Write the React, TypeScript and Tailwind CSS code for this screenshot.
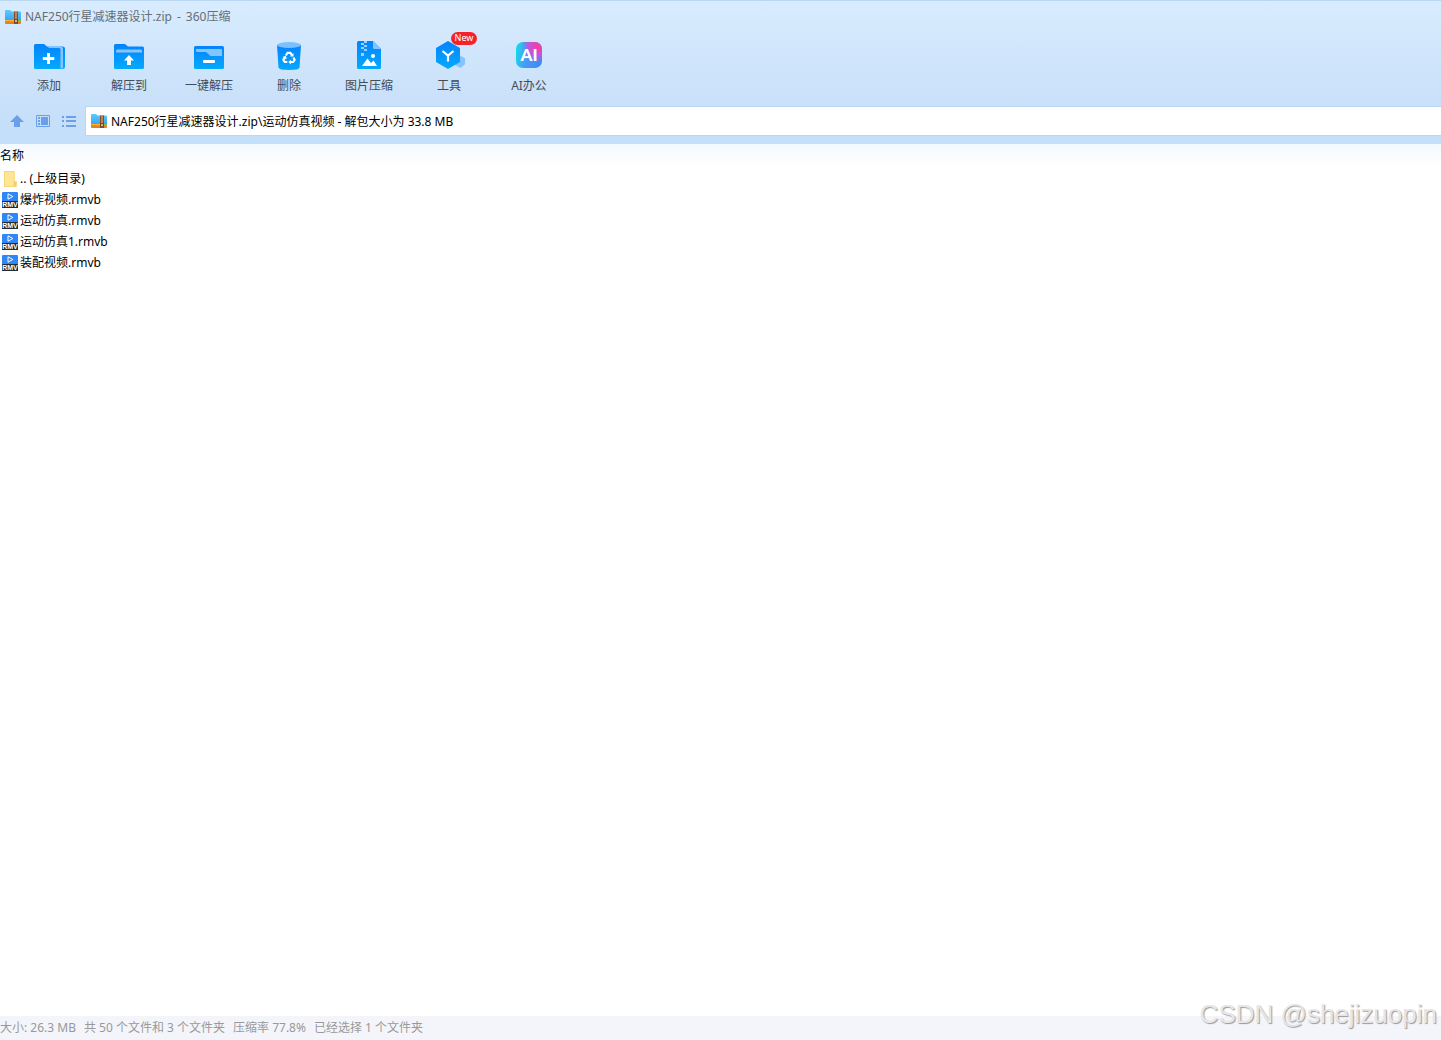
import type {ReactNode} from "react";

const ArchiveIcon = () => (
    <svg width="16" height="14" viewBox="0 0 16 14" className="shrink-0" aria-hidden="true">
        <defs>
            <linearGradient id="archive" x1="0" y1="0" x2="0" y2="1">
                <stop offset="0" stopColor="#5fcbfb"/>
                <stop offset="1" stopColor="#3aa0f2"/>
            </linearGradient>
        </defs>
        <path d="M0 1.2Q0 0 1.2 0H5l1.600 1.500H15q1 0 1 1V11H0z" fill="url(#archive)"/>
        <path d="M0 10h16v1.600H0z" fill="#f5b62e"/>
        <path d="M0 11.300h16V13q0 1-1 1H1q-1 0-1-1z" fill="#f07a22"/>
        <path d="M0 11.200h5v1H0zM13 10h3v1.500h-3z" fill="#79b943"/>
        <path d="M9 1.500h4V14H9z" fill="#8a4a22"/>
        <path d="M10.500 1.500h1V9h-1z" fill="#e8c08a"/>
        <rect x="10" y="9.500" width="2" height="3" fill="#fff3d8" stroke="#6d3512" strokeWidth=".7"/>
    </svg>
)

const Blue = ({id}: { id: string }) => (
    <defs>
        <linearGradient id={id} x1="0" y1="0" x2="0" y2="1">
            <stop offset="0" stopColor="#0583fc"/>
            <stop offset="1" stopColor="#04a9fe"/>
        </linearGradient>
    </defs>
)

const AddIcon = () => (
    <svg width="32" height="32" viewBox="0 0 32 32" aria-hidden="true">
        <Blue id="add"/>
        <path d="M1 5.500Q1 4 2.500 4H11l3 2.500h15.500q2.500 0 2.500 2V27q0 2-2 2H2.500Q1 29 1 27.500z" fill="url(#add)"/>
        <path d="M14 6h12.500q3.500 0 3.500 2.500V27q0 1-.8 1.500h-1.700V9.500q0-1.500-1.500-1.500H16z" fill="#85c5ff"/>
        <path d="M14.100 13h2.900v4h4.300v2.900H17V24h-2.900v-4.100H9.800V17h4.300z" fill="#fff"/>
    </svg>
)

const ExtractIcon = () => (
    <svg width="32" height="32" viewBox="0 0 32 32" aria-hidden="true">
        <Blue id="extract"/>
        <path d="M1 5.500Q1 4 2.500 4H12l3 2.500h14.500Q31 6.500 31 8v19.500q0 1.500-1.500 1.500h-27Q1 29 1 27.500z" fill="url(#extract)"/>
        <path d="M3 12.500V11q0-1.500 1.500-1.500h23Q29 9.500 29 11v1.500z" fill="#85c5ff"/>
        <path d="M16 15l5 5.500h-3V25h-4v-4.500h-3z" fill="#fff"/>
    </svg>
)

const QuickExtractIcon = () => (
    <svg width="32" height="32" viewBox="0 0 32 32" aria-hidden="true">
        <Blue id="quick"/>
        <rect x="1" y="6" width="30" height="23" rx="1.500" fill="url(#quick)"/>
        <path d="M3 9h25q1 0 1 1v6H17.500L13 12H4q-1 0-1-1z" fill="#85c5ff"/>
        <rect x="10" y="20" width="12" height="3" rx="1" fill="#fff"/>
    </svg>
)

const DeleteIcon = () => (
    <svg width="32" height="32" viewBox="0 0 32 32" aria-hidden="true">
        <Blue id="delete"/>
        <path d="M4 5h24l-1.500 22.500Q26.300 30 16 30T5.500 27.500z" fill="url(#delete)"/>
        <ellipse cx="16" cy="5" rx="12" ry="3" fill="#7cc1ff"/>
        <g fill="none" stroke="#fff" strokeWidth="2.200">
            <path d="M12.800 15.500l1.800-2.700h2.800l1.400 2.300"/>
            <path d="M20.400 17.500l1.200 2.200-1.400 2.300h-3.400"/>
            <path d="M14.300 22h-2.600l-1.300-2.300 1.400-2.300"/>
        </g>
        <path d="M20.500 13v3.500h-3.500zM18 19.800v4.600l-2.700-2.300zM9.500 17l3.400-1.200.8 3.400z" fill="#fff"/>
    </svg>
)

const ImageZipIcon = () => (
    <svg width="32" height="32" viewBox="0 0 32 32" aria-hidden="true">
        <Blue id="image"/>
        <path d="M4 2.500Q4 1 5.500 1H20l8 8v18.500q0 1.500-1.500 1.500h-21Q4 29 4 27.500z" fill="url(#image)"/>
        <path d="M20 1l8 8h-6.500Q20 9 20 7.500z" fill="#85c5ff"/>
        <path d="M11 1h3v2h-3zM8 3h3v2H8zM11 5h3v2h-3zM8 7h3v2H8zM11 9h3v2h-3zM8 13h3v3H8z" fill="#9cd1ff"/>
        <circle cx="20" cy="16" r="2" fill="#fff"/>
        <path d="M9 26l5.500-7.500L18 23l2.500-2.500L24 26z" fill="#fff"/>
    </svg>
)

const ToolsIcon = () => (
    <svg width="32" height="32" viewBox="0 0 32 32" aria-hidden="true">
        <Blue id="tools"/>
        <path d="M27 15.500l5 2.800v6L27.500 28 22 25z" fill="#84c3fc"/>
        <path d="M15 1l12 6.900v14L15 29 3 21.900v-14z" fill="url(#tools)"/>
        <path d="M9.500 11l5.500 4.500 5.500-4.500M15 15v6.500" fill="none" stroke="#fff" strokeWidth="2.200"/>
    </svg>
)

const AiIcon = () => (
    <svg width="32" height="32" viewBox="0 0 32 32" aria-hidden="true">
        <defs>
            <linearGradient id="ai" x1="0" y1=".4" x2="1" y2=".6">
                <stop offset="0" stopColor="#18d5ee"/>
                <stop offset=".45" stopColor="#4a98f5"/>
                <stop offset="1" stopColor="#3c8bf5"/>
            </linearGradient>
            <radialGradient id="aiPink" cx=".85" cy=".15" r=".65">
                <stop offset="0" stopColor="#fa3c96"/>
                <stop offset=".55" stopColor="#c554de"/>
                <stop offset="1" stopColor="#8b6cf0" stopOpacity="0"/>
            </radialGradient>
        </defs>
        <rect x="3" y="2" width="26" height="26" rx="7" fill="url(#ai)"/>
        <rect x="3" y="2" width="26" height="26" rx="7" fill="url(#aiPink)"/>
        <text x="16" y="21" textAnchor="middle" fontFamily="Lato, sans-serif" fontSize="17" fontWeight="900" fill="#fff">AI</text>
    </svg>
)

const FolderIcon = () => (
    <svg width="16" height="16" viewBox="0 0 16 16" className="shrink-0" aria-hidden="true">
        <path d="M2 0h10q.5 0 .5.500V10h1.500v6H2z" fill="#ffe694"/>
        <path d="M12.500 10.500H14.500V16H11.500V11.500z" fill="#f4cf62"/>
        <path d="M2.500.5h9.700v10h2v5H2.500z" fill="none" stroke="#f3d77b"/>
    </svg>
)

const RmvIcon = () => (
    <svg width="16" height="16" viewBox="0 0 16 16" className="shrink-0" aria-hidden="true">
        <rect width="16" height="10" rx="1" fill="#2f86f6"/>
        <path d="M6 1.800v5.400L10.800 4.500z" fill="#2f86f6" stroke="#fff"/>
        <rect y="9" width="16" height="7" rx=".5" fill="#222b36"/>
        <text x="8" y="15" textAnchor="middle" fontFamily="Liberation Sans, sans-serif" fontSize="7" fontWeight="700" fill="#fff">RMV</text>
    </svg>
)

type Tool = {
    label: string
    icon: ReactNode
    badge?: string
}

const tools: Tool[] = [
    {label: "添加", icon: <AddIcon/>},
    {label: "解压到", icon: <ExtractIcon/>},
    {label: "一键解压", icon: <QuickExtractIcon/>},
    {label: "删除", icon: <DeleteIcon/>},
    {label: "图片压缩", icon: <ImageZipIcon/>},
    {label: "工具", icon: <ToolsIcon/>, badge: "New"},
    {label: "AI办公", icon: <AiIcon/>},
]

const files = ["爆炸视频.rmvb", "运动仿真.rmvb", "运动仿真1.rmvb", "装配视频.rmvb"]

const summary = ["大小: 26.3 MB", "共 50 个文件和 3 个文件夹", "压缩率 77.8%", "已经选择 1 个文件夹"]

const Toolbar = () => (
    <nav className="flex px-[9px] pt-2 pb-3">
        {tools.map((tool) => (
            <button key={tool.label} type="button" className="relative flex w-20 flex-col items-center gap-1.5 text-[#444b55]">
                {tool.icon}
                <span className="leading-4">{tool.label}</span>
                {tool.badge && (
                    <span className="absolute -top-2 left-[42px] h-[13px] w-[26px] rounded-full bg-[#f5222d] text-center text-[9px] leading-3 text-white">
                        {tool.badge}
                    </span>
                )}
            </button>
        ))}
    </nav>
)

const AddressBar = () => (
    <div className="flex items-center bg-linear-to-b from-[#c8e0f9] to-[#c4dffa] pb-2">
        <div className="flex w-[85px] items-center gap-3 pl-2.5 text-[#6b9fea]">
            <button type="button" aria-label="向上">
                <svg width="14" height="14" viewBox="0 0 14 14" fill="currentColor">
                    <path d="M7 1l7 7h-4v5H4V8H0z"/>
                </svg>
            </button>
            <button type="button" aria-label="预览">
                <svg width="14" height="14" viewBox="0 0 14 14">
                    <path d="M.5 1.500h13v11H.5z" fill="none" stroke="currentColor"/>
                    <path d="M2 3h2v2H2zM2 6h2v2H2zM2 9h2v2H2zM5 3h7v8H5z" fill="currentColor"/>
                </svg>
            </button>
            <button type="button" aria-label="列表">
                <svg width="14" height="14" viewBox="0 0 14 14" fill="currentColor">
                    <path d="M0 2h2v2H0zM0 6h2v2H0zM0 11h2v2H0zM4 2h10v2H4zM4 6h10v2H4zM4 11h10v2H4z"/>
                </svg>
            </button>
        </div>
        <label className="flex h-[30px] flex-1 items-center gap-1 border border-r-0 border-[#b9d6f2] bg-white pl-[5px]">
            <ArchiveIcon/>
            <input
                type="text"
                aria-label="路径"
                defaultValue="NAF250行星减速器设计.zip\运动仿真视频 - 解包大小为 33.8 MB"
                className="h-full min-w-0 flex-1 text-black outline-none"
            />
        </label>
    </div>
)

const FileList = () => (
    <table className="w-full border-collapse text-left text-black">
        <thead>
        <tr className="h-6 bg-linear-to-b from-[#f3f9ff] to-white">
            <th className="p-0 font-normal"><span className="block leading-5">名称</span></th>
        </tr>
        </thead>
        <tbody>
        <tr>
            <td className="p-0">
                <div className="flex h-[21px] items-center gap-0.5 pl-0.5"><FolderIcon/>.. (上级目录)</div>
            </td>
        </tr>
        {files.map((file) => (
            <tr key={file}>
                <td className="p-0">
                    <div className="flex h-[21px] items-center gap-0.5 pl-0.5"><RmvIcon/>{file}</div>
                </td>
            </tr>
        ))}
        </tbody>
    </table>
)

const App = () => {
    return (
        <div className="relative flex h-screen flex-col overflow-hidden bg-white font-['Noto_Sans','Noto_Sans_CJK_SC',sans-serif] text-xs">
            <header className="border-t border-[#b9d6f2] bg-linear-to-b from-[#d9ecff] to-[#c8e0f9]">
                <div className="flex h-[31px] items-center gap-1 pl-[5px] text-[#666d75]">
                    <ArchiveIcon/>
                    <h1 className="flex gap-[5px]">
                        <span>NAF250行星减速器设计.zip</span>
                        <span>-</span>
                        <span>360压缩</span>
                    </h1>
                </div>
                <Toolbar/>
            </header>
            <AddressBar/>
            <main className="flex-1">
                <FileList/>
            </main>
            <footer className="flex h-6 items-center gap-2 bg-[#f4f5fa] text-[#999]">
                {summary.map((item) => <span key={item}>{item}</span>)}
            </footer>
            <div className="absolute right-1 bottom-2 font-['Liberation_Sans',sans-serif] text-[26px] leading-9 text-[#e6e6e8] [text-shadow:1px_1px_1px_#999]">
                CSDN @shejizuopin
            </div>
        </div>
    )
}

export default App
